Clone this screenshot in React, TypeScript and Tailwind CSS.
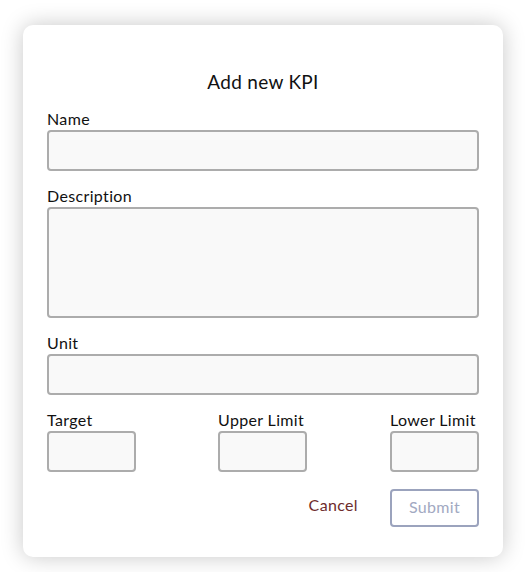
import React from 'react';

const inputCls =
  'block w-full h-[41px] rounded-[4px] border-2 border-[#acacac] bg-[#f9f9f9] px-2 outline-none';

const Field: React.FC<{ label: string; className?: string; children?: React.ReactNode }> = ({
  label,
  className,
  children,
}) => (
  <div className={className}>
    <label className="block text-[16px] leading-[20px] tracking-[0.35px] text-[#111] mb-[1px] whitespace-nowrap">{label}</label>
    {children}
  </div>
);

export default function App() {
  return (
    <div className="min-h-[572px] bg-white pt-[25px] pl-[23px]" style={{ fontFamily: 'Lato, "Noto Sans", sans-serif' }}>
      <div className="w-[480px] h-[532px] rounded-[10px] bg-white shadow-[0_0_22px_rgba(0,0,0,0.22)] px-[24px] pt-[45px]">
        <h2 className="text-center text-[19px] leading-[24px] tracking-[0.3px] text-[#111] mb-[15px]">Add new KPI</h2>

        <Field label="Name">
          <input className={inputCls} />
        </Field>

        <Field label="Description" className="mt-[15px]">
          <textarea className="block w-full h-[111px] rounded-[4px] border-2 border-[#acacac] bg-[#f9f9f9] px-2 outline-none resize-none" />
        </Field>

        <Field label="Unit" className="mt-[15px]">
          <input className={inputCls} />
        </Field>

        <div className="mt-[15px] flex justify-between">
          <Field label="Target" className="w-[89px]">
            <input className={inputCls} />
          </Field>
          <Field label="Upper Limit" className="w-[89px] -ml-[1px]">
            <input className={inputCls} />
          </Field>
          <Field label="Lower Limit" className="w-[89px]">
            <input className={inputCls} />
          </Field>
        </div>

        <div className="mt-[17px] flex items-center justify-end gap-[32px]">
          <button className="text-[16px] leading-[20px] tracking-[0.35px] text-[#6e2c2c] -mt-[6px]">Cancel</button>
          <button className="w-[89px] h-[38px] rounded-[4px] border-2 border-[#9ba3bd] text-[16px] tracking-[0.35px] text-[#a2a9c2] pb-[3px]">
            Submit
          </button>
        </div>
      </div>
    </div>
  );
}
